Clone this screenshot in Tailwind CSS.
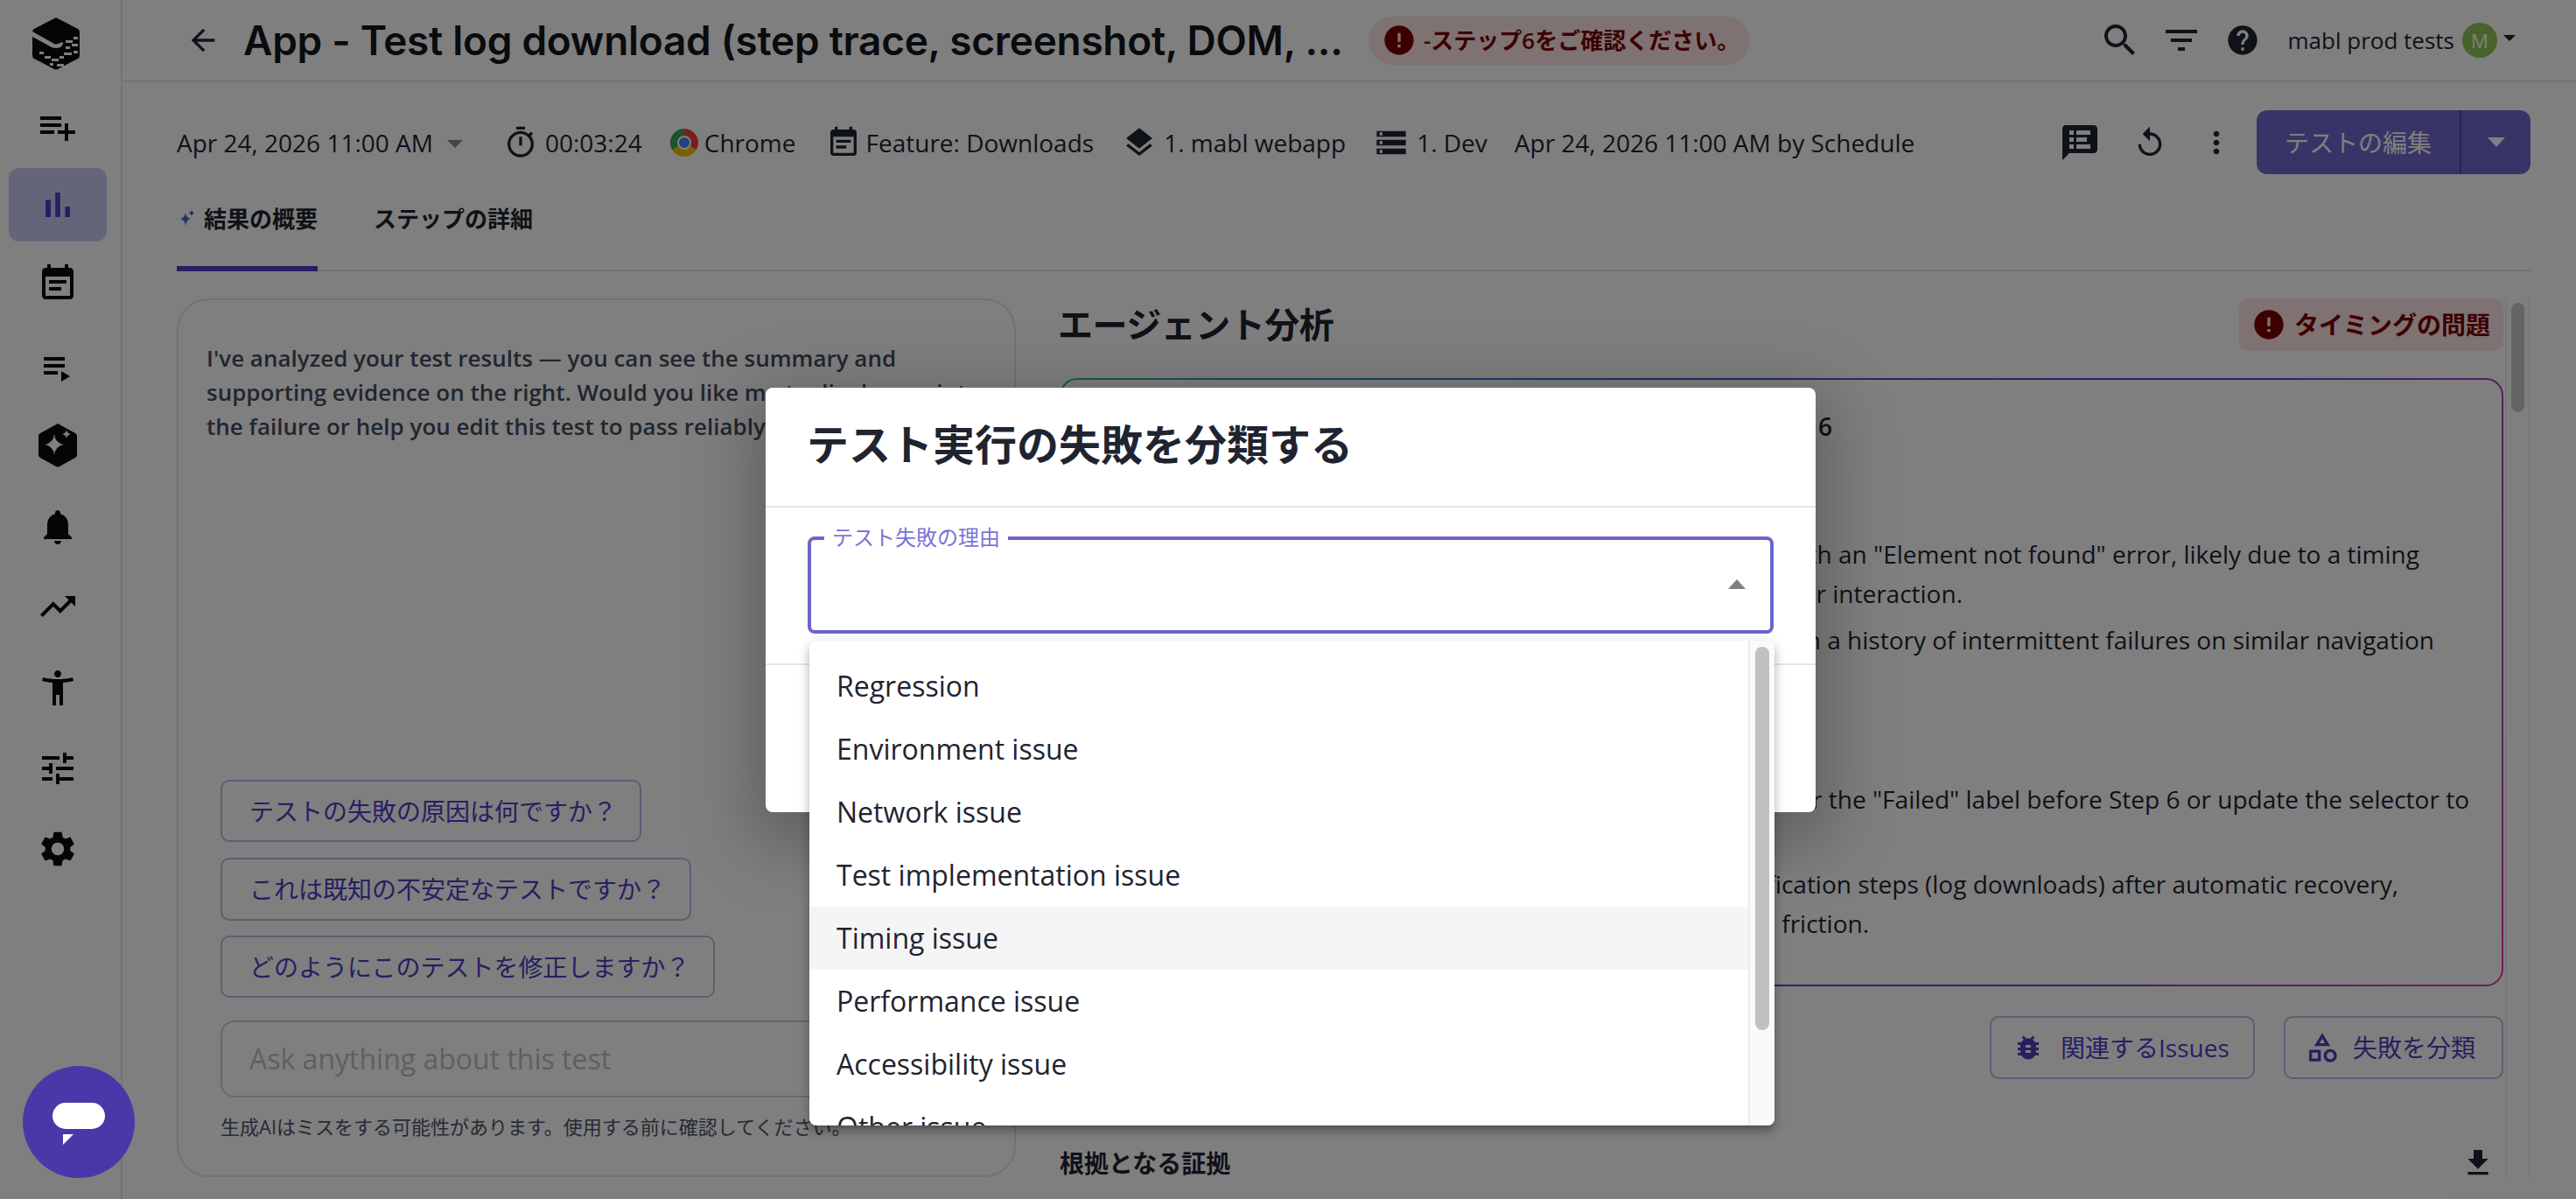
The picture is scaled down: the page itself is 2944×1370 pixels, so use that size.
<!DOCTYPE html>
<html lang="ja">
<head>
<meta charset="utf-8">
<title>App - Test log download</title>
<script src="https://cdn.jsdelivr.net/npm/@tailwindcss/browser@4"></script>
</head>
<body class="bg-white font-['Open_Sans','Noto_Sans_CJK_JP',sans-serif] text-[#1f2430]">
<div class="relative flex w-[2944px] h-[1370px] overflow-hidden bg-white">

  <!-- left nav -->
  <nav class="w-[140px] h-full shrink-0 border-r-2 border-[#e6e6e6] pr-[6px] flex flex-col items-center text-[#0a0b0e]">
    <svg class="mt-[20px] ml-[-5px] w-[54px] h-[60px]" viewBox="0 0 54 60">
      <path fill="currentColor" d="M27 0 52 13q2 1 2 4v26q0 3-2 4L29 59q-2 1-4 0L2 47q-2-1-2-4V17q0-3 2-4z"/>
      <path fill="#fff" d="M0 22 22 34q5 2 10 0q3-2 3-6l-6 2q-2 1-4 0L0 16z"/>
      <path fill="#fff" d="M38 26h8v3h-8zM47 22h5v3h-5zM38 33h5v3h-5zM45 30h7v3h-7zM36 40h9v3h-9zM47 38h5v3h-5zM14 44h7v3h-7zM22 47h8v3h-8zM31 44h5v3h-5zM20 52h4v3h-4zM28 53h8v3h-8zM8 39h5v3H8z"/>
    </svg>
    <svg class="mt-[41px] w-[48px] h-[48px]" viewBox="0 0 24 24"><path fill="currentColor" d="M14 10H2v2h12v-2zm0-4H2v2h12V6zm4 8v-4h-2v4h-4v2h4v4h2v-4h4v-2h-4zM2 16h8v-2H2v2z"/></svg>
    <div class="mt-[23px] w-[112px] h-[84px] rounded-[12px] bg-[#cbcbf4] flex items-center justify-center text-[#4f3fc5]">
      <svg class="w-[48px] h-[48px]" viewBox="0 0 24 24"><path fill="currentColor" d="M5 9.200h3V19H5zM10.600 5h2.800v14h-2.800zm5.600 8H19v6h-2.800z"/></svg>
    </div>
    <svg class="mt-[24px] w-[48px] h-[48px]" viewBox="0 0 24 24"><path fill="currentColor" d="M17 10H7v2h10v-2zm2-7h-1V1h-2v2H8V1H6v2H5c-1.110 0-1.990.9-1.990 2L3 19c0 1.100.89 2 2 2h14c1.100 0 2-.9 2-2V5c0-1.100-.9-2-2-2zm0 16H5V8h14v11zm-5-5H7v2h7v-2z"/></svg>
    <svg class="mt-[48px] w-[48px] h-[48px]" viewBox="0 0 24 24"><path fill="currentColor" d="M4 10h12v2H4zm0-4h12v2H4zm0 8h8v2H4zm10 0v6l5-3z"/></svg>
    <svg class="mt-[40px] w-[44px] h-[50px]" viewBox="0 0 44 50">
      <path fill="currentColor" d="M22 0 42 11q2 1 2 3v22q0 2-2 3L24 49q-2 1-4 0L2 39q-2-1-2-3V14q0-2 2-3z"/>
      <path fill="#fff" d="M18 12q1 10 11 12-10 2-11 12-1-10-11-12 10-2 11-12zM32 7q.5 4 5 5-4.500 1-5 5-.5-4-5-5 4.500-1 5-5z"/>
    </svg>
    <svg class="mt-[44px] w-[48px] h-[48px]" viewBox="0 0 24 24"><path fill="currentColor" d="M12 22c1.100 0 2-.9 2-2h-4c0 1.100.89 2 2 2zm6-6v-5c0-3.070-1.640-5.640-4.500-6.320V4c0-.83-.67-1.500-1.500-1.500s-1.500.67-1.500 1.500v.68C7.630 5.360 6 7.920 6 11v5l-2 2v1h16v-1l-2-2z"/></svg>
    <svg class="mt-[43px] w-[48px] h-[48px]" viewBox="0 0 24 24"><path fill="currentColor" d="M16 6l2.290 2.290-4.880 4.880-4-4L2 16.590 3.410 18l6-6 4 4 6.300-6.290L22 12V6z"/></svg>
    <svg class="mt-[45px] w-[48px] h-[48px]" viewBox="0 0 24 24"><path fill="currentColor" d="M20.500 6c-2.610.7-5.670 1-8.500 1s-5.890-.3-8.500-1L3 8c1.860.5 4 .83 6 1v13h2v-6h2v6h2V9c2-.17 4.140-.5 6-1l-.5-2zM12 6c1.100 0 2-.9 2-2s-.9-2-2-2-2 .9-2 2 .9 2 2 2z"/></svg>
    <svg class="mt-[44px] w-[48px] h-[48px]" viewBox="0 0 24 24"><path fill="currentColor" d="M3 17v2h6v-2H3zM3 5v2h10V5H3zm10 16v-2h8v-2h-8v-2h-2v6h2zM7 9v2H3v2h4v2h2V9H7zm14 4v-2H11v2h10zm-6-4h2V7h4V5h-4V3h-2v6z"/></svg>
    <svg class="mt-[44px] w-[48px] h-[48px]" viewBox="0 0 24 24"><path fill="currentColor" d="M19.140 12.940c.04-.3.06-.61.06-.94 0-.32-.02-.64-.07-.94l2.030-1.580c.18-.14.23-.41.12-.61l-1.920-3.320c-.12-.22-.37-.29-.59-.22l-2.390.96c-.5-.38-1.030-.7-1.620-.94l-.36-2.540c-.04-.24-.24-.41-.48-.41h-3.840c-.24 0-.43.17-.47.41l-.36 2.540c-.59.24-1.130.57-1.620.94l-2.390-.96c-.22-.08-.47 0-.59.22L2.740 8.870c-.12.21-.08.47.12.61l2.030 1.580c-.05.3-.09.63-.09.94s.02.64.07.94l-2.030 1.580c-.18.14-.23.41-.12.61l1.920 3.320c.12.22.37.29.59.22l2.390-.96c.5.38 1.030.7 1.620.94l.36 2.540c.05.24.24.41.48.41h3.840c.24 0 .44-.17.47-.41l.36-2.540c.59-.24 1.130-.56 1.620-.94l2.390.96c.22.08.47 0 .59-.22l1.920-3.320c.12-.22.07-.47-.12-.61l-2.010-1.580zM12 15.600c-1.980 0-3.600-1.620-3.600-3.600s1.620-3.600 3.600-3.600 3.600 1.620 3.600 3.600-1.620 3.600-3.600 3.600z"/></svg>
  </nav>

  <main class="flex-1 min-w-0 flex flex-col">
    <!-- top bar -->
    <header class="h-[94px] shrink-0 border-b-2 border-[#e6e6e6] flex items-center pl-[72px] pr-[69px]">
      <svg class="w-[40px] h-[40px] text-[#1f2430]" viewBox="0 0 24 24"><path fill="currentColor" d="M20 11H7.830l5.590-5.590L12 4l-8 8 8 8 1.410-1.410L7.830 13H20v-2z"/></svg>
      <h1 class="ml-[26px] w-[1255px] shrink-0 whitespace-nowrap font-['Inter',sans-serif] font-semibold text-[46px] tracking-[-0.3px] leading-[60px] text-[#14161c]">App - Test log download (step trace, screenshot, DOM, ...</h1>
      <div class="ml-[31px] h-[55px] w-[436px] shrink-0 rounded-full bg-[#fde4e4] flex items-center pl-[15px] text-[#7a0000]">
        <svg class="w-[40px] h-[40px]" viewBox="0 0 24 24"><path fill="currentColor" d="M12 2C6.480 2 2 6.480 2 12s4.480 10 10 10 10-4.480 10-10S17.520 2 12 2zm1 15h-2v-2h2v2zm0-4h-2V7h2v6z"/></svg>
        <span class="ml-[8px] text-[26px] font-semibold whitespace-nowrap">-ステップ6をご確認ください。</span>
      </div>
      <svg class="ml-auto w-[48px] h-[48px] text-[#1f2430]" viewBox="0 0 24 24"><path fill="currentColor" d="M15.500 14h-.79l-.28-.27C15.410 12.590 16 11.110 16 9.500 16 5.910 13.090 3 9.500 3S3 5.910 3 9.500 5.910 16 9.500 16c1.610 0 3.090-.59 4.230-1.570l.27.28v.79l5 4.990L20.490 19l-4.990-5zm-6 0C7.010 14 5 11.990 5 9.500S7.010 5 9.500 5 14 7.010 14 9.500 11.990 14 9.500 14z"/></svg>
      <svg class="ml-[22px] w-[48px] h-[48px] text-[#1f2430]" viewBox="0 0 24 24"><path fill="currentColor" d="M10 18h4v-2h-4v2zM3 6v2h18V6H3zm3 7h12v-2H6v2z"/></svg>
      <svg class="ml-[26px] w-[40px] h-[40px] text-[#1f2430]" viewBox="0 0 24 24"><path fill="currentColor" d="M12 2C6.480 2 2 6.480 2 12s4.480 10 10 10 10-4.480 10-10S17.520 2 12 2zm1 17h-2v-2h2v2zm2.070-7.750l-.9.92C13.450 12.900 13 13.500 13 15h-2v-.5c0-1.100.45-2.100 1.170-2.830l1.240-1.260c.37-.36.59-.86.59-1.410 0-1.100-.9-2-2-2s-2 .9-2 2H8c0-2.210 1.790-4 4-4s4 1.790 4 4c0 .88-.36 1.680-.93 2.250z"/></svg>
      <span class="ml-[32px] text-[26px] whitespace-nowrap">mabl prod tests</span>
      <span class="ml-[9px] w-[40px] h-[40px] rounded-full bg-[#8fc652] flex items-center justify-center text-[22px] text-white">M</span>
      <span class="ml-[7px] mb-[6px] w-0 h-0 border-x-[7px] border-x-transparent border-t-[7px] border-t-[#1f2430]"></span>
    </header>

    <div class="flex-1 min-h-0 flex flex-col pl-[62px] pr-[52px]">
      <!-- run meta row -->
      <div class="mt-[32px] h-[73px] shrink-0 flex items-center text-[28px] whitespace-nowrap">
        <span>Apr 24, 2026 11:00 AM</span>
        <span class="ml-[16px] mt-[4px] w-0 h-0 border-x-[9px] border-x-transparent border-t-[9px] border-t-[#8a8a8a]"></span>
        <svg class="ml-[46px] w-[40px] h-[40px]" viewBox="0 0 24 24"><path fill="currentColor" d="M15 1H9v2h6V1zm-4 13h2V8h-2v6zm8.030-6.610l1.420-1.420c-.43-.51-.9-.99-1.410-1.410l-1.420 1.420C16.070 4.740 14.120 4 12 4c-4.970 0-9 4.030-9 9s4.020 9 9 9 9-4.030 9-9c0-2.120-.74-4.070-1.970-5.610zM12 20c-3.870 0-7-3.130-7-7s3.130-7 7-7 7 3.130 7 7-3.130 7-7 7z"/></svg>
        <span class="ml-[8px]">00:03:24</span>
        <span class="ml-[32px] w-[32px] h-[32px] rounded-full bg-[conic-gradient(#ea4335_0deg_120deg,#fbbc05_120deg_240deg,#34a853_240deg_360deg)] flex items-center justify-center">
          <span class="w-[16px] h-[16px] rounded-full bg-[#4285f4] border-2 border-white"></span>
        </span>
        <span class="ml-[7px]">Chrome</span>
        <svg class="ml-[34px] w-[40px] h-[40px]" viewBox="0 0 24 24"><path fill="currentColor" d="M17 10H7v2h10v-2zm2-7h-1V1h-2v2H8V1H6v2H5c-1.110 0-1.990.9-1.990 2L3 19c0 1.100.89 2 2 2h14c1.100 0 2-.9 2-2V5c0-1.100-.9-2-2-2zm0 16H5V8h14v11zm-5-5H7v2h7v-2z"/></svg>
        <span class="ml-[6px]">Feature: Downloads</span>
        <svg class="ml-[32px] w-[40px] h-[40px]" viewBox="0 0 24 24"><path fill="currentColor" d="M11.990 18.540l-7.370-5.730L3 14.070l9 7 9-7-1.630-1.270-7.380 5.740zM12 16l7.360-5.730L21 9l-9-7-9 7 1.630 1.270L12 16z"/></svg>
        <span class="ml-[8px]">1. mabl webapp</span>
        <svg class="ml-[32px] w-[40px] h-[40px]" viewBox="0 0 24 24"><path fill="currentColor" d="M2 20h20v-4H2v4zm2-3h2v2H4v-2zM2 4v4h20V4H2zm4 3H4V5h2v2zm-4 7h20v-4H2v4zm2-3h2v2H4v-2z"/></svg>
        <span class="ml-[9px]">1. Dev</span>
        <span class="ml-[31px]">Apr 24, 2026 11:00 AM by Schedule</span>
        <svg class="ml-auto w-[48px] h-[48px]" viewBox="0 0 24 24"><path fill="currentColor" fill-rule="evenodd" d="M20 2H4c-1.100 0-1.990.9-1.990 2L2 22l4-4h14c1.100 0 2-.9 2-2V4c0-1.100-.9-2-2-2zM6 5h2.500v2.500H6zm4 0h8v2.500h-8zM6 9h2.500v2.500H6zm4 0h6v2.500h-6zM6 13h2.500v2.500H6zm4 0h8v2.500h-8z"/></svg>
        <svg class="ml-[36px] w-[40px] h-[40px]" viewBox="0 0 24 24"><path fill="currentColor" d="M12 5V1L7 6l5 5V7c3.310 0 6 2.690 6 6s-2.690 6-6 6-6-2.690-6-6H4c0 4.420 3.580 8 8 8s8-3.580 8-8-3.580-8-8-8z"/></svg>
        <svg class="ml-[36px] w-[40px] h-[40px]" viewBox="0 0 24 24"><path fill="currentColor" d="M12 8c1.100 0 2-.9 2-2s-.9-2-2-2-2 .9-2 2 .9 2 2 2zm0 2c-1.100 0-2 .9-2 2s.9 2 2 2 2-.9 2-2-.9-2-2-2zm0 6c-1.100 0-2 .9-2 2s.9 2 2 2 2-.9 2-2-.9-2-2-2z"/></svg>
        <div class="ml-[26px] w-[313px] h-[73px] rounded-[12px] bg-[#7068d0] flex text-white">
          <span class="w-[232px] flex items-center justify-center">テストの編集</span>
          <span class="flex-1 border-l-2 border-[#5045b8] flex items-center justify-center">
            <span class="w-0 h-0 border-x-[10px] border-x-transparent border-t-[11px] border-t-white"></span>
          </span>
        </div>
      </div>

      <!-- tabs -->
      <div class="h-[111px] shrink-0 border-b-2 border-[#e6e6e6] flex text-[26px] font-semibold whitespace-nowrap">
        <div class="h-[111px] pt-[36px] w-[161px] border-b-[6px] border-[#4f3fc5] flex items-start">
          <svg class="mt-[5px] ml-[2px] w-[20px] h-[20px] mr-[9px]" viewBox="0 0 20 20"><path fill="#3f6fd0" d="M8 3q1 6 6 7-5 1-6 8-1-7-6-8 5-1 6-7z"/><path fill="#4f3fc5" d="M15 0q.5 3 3 3.500-2.500.5-3 3.500-.5-3-3-3.500 2.500-.5 3-3.500z"/></svg>
          <span class="leading-[30px]">結果の概要</span>
        </div>
        <div class="ml-[64px] pt-[36px] leading-[30px]">ステップの詳細</div>
      </div>

      <div class="mt-[31px] h-[1004px] shrink-0 flex">
        <!-- chat card -->
        <section class="w-[959px] h-full shrink-0 rounded-[36px] border-2 border-[#e4e4e4] flex flex-col">
          <p class="pt-[47px] px-[32px] text-[26px] leading-[39px] font-semibold text-[#454c5e] whitespace-nowrap">I've analyzed your test results — you can see the summary and<br>supporting evidence on the right. Would you like me to dig deeper into<br>the failure or help you edit this test to pass reliably?</p>
          <div class="mt-auto pl-[48px] pr-[32px] pb-[42px] flex flex-col items-start">
            <button class="h-[71px] w-[481px] rounded-[10px] border-2 border-[#bdb8e6] text-[28px] text-[#4f3fc5] pl-[31px] text-left">テストの失敗の原因は何ですか？</button>
            <button class="mt-[18px] h-[72px] w-[538px] rounded-[10px] border-2 border-[#bdb8e6] text-[28px] text-[#4f3fc5] pl-[31px] text-left">これは既知の不安定なテストですか？</button>
            <button class="mt-[17px] h-[71px] w-[565px] rounded-[10px] border-2 border-[#bdb8e6] text-[28px] text-[#4f3fc5] pl-[31px] text-left">どのようにこのテストを修正しますか？</button>
            <div class="mt-[26px] h-[88px] w-full rounded-[16px] border-2 border-[#cfd0d4] flex items-center pl-[31px] text-[32px] text-[#bcbfc6]">Ask anything about this test</div>
            <p class="mt-[19px] text-[22px] leading-[28px] text-[#4d5466] whitespace-nowrap">生成AIはミスをする可能性があります。使用する前に確認してください。</p>
          </div>
        </section>

        <!-- agent analysis -->
        <section class="flex-1 min-w-0 ml-[50px] h-full flex">
          <div class="w-[1650px] shrink-0 flex flex-col">
            <div class="h-[60px] shrink-0 flex justify-between items-center">
              <h2 class="ml-[-2px] text-[40px] tracking-[-0.5px] font-semibold leading-[54px]">エージェント分析</h2>
              <div class="h-[60px] w-[302px] rounded-[10px] bg-[#fde4e4] flex items-center pl-[14px] text-[#7a0000]">
                <svg class="w-[40px] h-[40px]" viewBox="0 0 24 24"><path fill="currentColor" d="M12 2C6.480 2 2 6.480 2 12s4.480 10 10 10 10-4.480 10-10S17.520 2 12 2zm1 15h-2v-2h2v2zm0-4h-2V7h2v6z"/></svg>
                <span class="ml-[9px] text-[28px] font-semibold whitespace-nowrap">タイミングの問題</span>
              </div>
            </div>
            <div class="mt-[31px] h-[695px] shrink-0 rounded-[20px] p-[2px] bg-[linear-gradient(115deg,#2fb3a8,#3560c8_35%,#6a3fd8_70%,#e03fb0)]">
              <div class="h-full rounded-[18px] bg-white text-[28px] leading-[45px] whitespace-nowrap text-right">
                <p class="pt-[31px] pr-[765px] font-semibold">Root cause: Timing issue waiting for the label at Step 6</p>
                <p class="mt-[101px] pr-[94px]">Step 6 timed out on the label and failed with an "Element not found" error, likely due to a timing</p>
                <p class="pr-[616px]">issue where the page was not ready for interaction.</p>
                <p class="mt-[8px] pr-[77px]">This test has passed recently, but with a history of intermittent failures on similar navigation</p>
                <p class="pr-[1300px]">steps.</p>
                <p class="mt-[92px] pr-[37px]">Add a wait step for the "Failed" label before Step 6 or update the selector to</p>
                <p class="pr-[1100px]">use a stable attribute.</p>
                <p class="mt-[7px] pr-[118px]">Consider adding verification steps (log downloads) after automatic recovery,</p>
                <p class="pr-[723px]">to reduce additional friction.</p>
              </div>
            </div>
            <div class="mt-[34px] shrink-0 flex justify-end gap-[33px] text-[28px] text-[#4f3fc5]">
              <button class="h-[72px] w-[303px] rounded-[10px] border-2 border-[#bdb8e6] flex items-center pl-[24px]">
                <svg class="w-[36px] h-[36px]" viewBox="0 0 24 24"><path fill="currentColor" d="M20 8h-2.810c-.45-.78-1.070-1.450-1.820-1.960L17 4.410 15.590 3l-2.170 2.170C12.960 5.060 12.490 5 12 5c-.49 0-.96.06-1.410.17L8.410 3 7 4.410l1.620 1.630C7.880 6.550 7.260 7.220 6.810 8H4v2h2.090c-.05.33-.09.66-.09 1v1H4v2h2v1c0 .34.04.67.09 1H4v2h2.810c1.040 1.790 2.970 3 5.190 3s4.150-1.210 5.190-3H20v-2h-2.090c.05-.33.09-.66.09-1v-1h2v-2h-2v-1c0-.34-.04-.67-.09-1H20V8zm-6 8h-4v-2h4v2zm0-4h-4v-2h4v2z"/></svg>
                <span class="ml-[19px] whitespace-nowrap">関連するIssues</span>
              </button>
              <button class="h-[72px] w-[251px] rounded-[10px] border-2 border-[#bdb8e6] flex items-center pl-[22px]">
                <svg class="w-[40px] h-[40px]" viewBox="0 0 24 24"><path fill="currentColor" d="M12 2l-5.500 9h11L12 2zm0 3.840L13.930 9h-3.870L12 5.840zM17.500 13c-2.490 0-4.500 2.010-4.500 4.500s2.010 4.500 4.500 4.500 4.500-2.010 4.500-4.500-2.010-4.500-4.500-4.500zm0 7c-1.380 0-2.500-1.120-2.500-2.500s1.120-2.500 2.500-2.500 2.500 1.120 2.500 2.500-1.120 2.500-2.500 2.500zM3 21.500h8v-8H3v8zm2-6h4v4H5v-4z"/></svg>
                <span class="ml-[15px] whitespace-nowrap">失敗を分類</span>
              </button>
            </div>
            <div class="mt-[76px] h-[40px] shrink-0 flex items-center justify-between">
              <h3 class="text-[28px] font-semibold">根拠となる証拠</h3>
              <svg class="w-[40px] h-[40px] mr-[9px]" viewBox="0 0 24 24"><path fill="currentColor" d="M19 9h-4V3H9v6H5l7 7 7-7zM5 18v2h14v-2H5z"/></svg>
            </div>
          </div>
          <!-- scroll track -->
          <div class="ml-[2px] w-[28px] h-full border-x-2 border-[#f0f0f0] flex justify-center pt-[5px]">
            <div class="w-[15px] h-[125px] rounded-full bg-[#c8c8c8]"></div>
          </div>
        </section>
      </div>
    </div>
  </main>

  <!-- backdrop -->
  <div class="absolute inset-0 z-10 bg-black/50"></div>

  <!-- chat launcher -->
  <div class="absolute z-20 left-[26px] top-[1218px] w-[128px] h-[128px] rounded-full bg-[#4a38a8] flex items-center justify-center">
    <span class="relative w-[60px] h-[30px] rounded-full bg-white mb-[14px]">
      <span class="absolute left-[12px] top-[36px] w-0 h-0 border-t-[12px] border-t-white border-r-[12px] border-r-transparent"></span>
    </span>
  </div>

  <!-- classify dialog -->
  <div class="absolute z-20 left-[875px] top-[443px] w-[1200px] h-[485px] rounded-[8px] bg-white shadow-[0_22px_76px_16px_rgba(0,0,0,0.25)]">
    <div class="h-[137px] border-b-2 border-[#e5e5e5] pt-[35px] pl-[47px]">
      <h2 class="text-[48px] leading-[60px] font-semibold text-[#1f2430]">テスト実行の失敗を分類する</h2>
    </div>
    <div class="pt-[33px] pl-[48px]">
      <div class="relative w-[1104px] h-[111px] rounded-[8px] border-4 border-[#6b66cc]">
        <span class="absolute -top-[19px] left-[15px] px-[9px] bg-white text-[24px] leading-[32px] text-[#7a74d8] whitespace-nowrap">テスト失敗の理由</span>
        <span class="absolute right-[28px] top-[45px] w-0 h-0 border-x-[10px] border-x-transparent border-b-[11px] border-b-[#808080]"></span>
      </div>
    </div>
    <div class="mt-[34px] border-t-2 border-[#e5e5e5]"></div>

    <!-- dropdown menu -->
    <div class="absolute left-[50px] top-[289px] w-[1103px] h-[554px] rounded-[8px] bg-white overflow-hidden flex shadow-[0_5px_5px_-3px_rgba(0,0,0,0.2),0_8px_10px_1px_rgba(0,0,0,0.14),0_3px_14px_2px_rgba(0,0,0,0.12)]">
      <ul class="flex-1 pt-[16px] text-[32px] text-[#1f2430]">
        <li class="h-[72px] pl-[31px] flex items-center">Regression</li>
        <li class="h-[72px] pl-[31px] flex items-center">Environment issue</li>
        <li class="h-[72px] pl-[31px] flex items-center">Network issue</li>
        <li class="h-[72px] pl-[31px] flex items-center">Test implementation issue</li>
        <li class="h-[72px] pl-[31px] flex items-center bg-[#f5f5f5]">Timing issue</li>
        <li class="h-[72px] pl-[31px] flex items-center">Performance issue</li>
        <li class="h-[72px] pl-[31px] flex items-center">Accessibility issue</li>
        <li class="h-[72px] pl-[31px] flex items-center">Other issue</li>
      </ul>
      <div class="w-[30px] h-full shrink-0 bg-[#fafafa] border-l-2 border-[#ececec] pl-[6px] pt-[7px]">
        <div class="w-[16px] h-[438px] rounded-full bg-[#c1c1c1]"></div>
      </div>
    </div>
  </div>
</div>
</body>
</html>
